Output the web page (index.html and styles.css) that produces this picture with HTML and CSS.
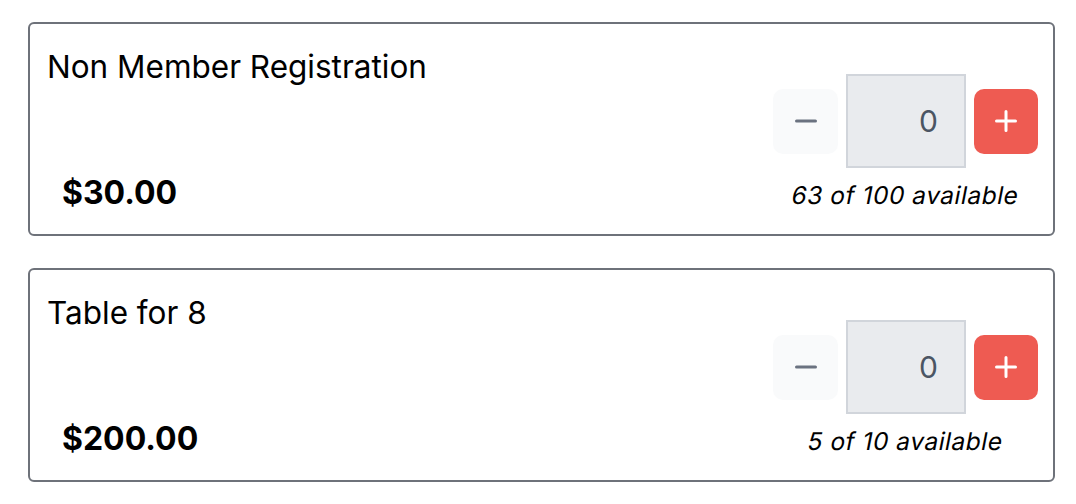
FILE: index.html
```html
<!DOCTYPE html>
<html lang="en">
<head>
<meta charset="utf-8">
<link rel="stylesheet" href="styles.css">
</head>
<body>
<div class="list">
  <div class="card">
    <div class="info">
      <div class="title">Non Member Registration</div>
      <div class="price">$30.00</div>
    </div>
    <div class="buy">
      <div class="stepper">
        <button class="btn minus" aria-label="decrease"><svg viewBox="0 0 22 22" width="22" height="22"><path d="M1.5 11h19" stroke="currentColor" stroke-width="3" stroke-linecap="round"/></svg></button>
        <div class="qty">0</div>
        <button class="btn plus" aria-label="increase"><svg viewBox="0 0 22 22" width="22" height="22"><path d="M1.5 11h19M11 1.5v19" stroke="currentColor" stroke-width="3" stroke-linecap="round"/></svg></button>
      </div>
      <div class="avail"><span class="slant">63 of 100 available</span></div>
    </div>
  </div>
  <div class="card">
    <div class="info">
      <div class="title">Table for 8</div>
      <div class="price">$200.00</div>
    </div>
    <div class="buy">
      <div class="stepper">
        <button class="btn minus" aria-label="decrease"><svg viewBox="0 0 22 22" width="22" height="22"><path d="M1.5 11h19" stroke="currentColor" stroke-width="3" stroke-linecap="round"/></svg></button>
        <div class="qty">0</div>
        <button class="btn plus" aria-label="increase"><svg viewBox="0 0 22 22" width="22" height="22"><path d="M1.5 11h19M11 1.5v19" stroke="currentColor" stroke-width="3" stroke-linecap="round"/></svg></button>
      </div>
      <div class="avail"><span class="slant">5 of 10 available</span></div>
    </div>
  </div>
</div>
</body>
</html>
```

FILE: styles.css
```css
* { box-sizing: border-box; }
html, body { margin: 0; padding: 0; background: #ffffff; }
body { font-family: Inter, "Noto Sans", sans-serif; color: #000; }

.list {
  display: flex;
  flex-direction: column;
  gap: 32px;
  padding: 22px 21px 0 28px;
}

.card {
  display: flex;
  justify-content: space-between;
  height: 214px;
  border: 2px solid #6e727a;
  border-radius: 6px;
  padding: 24px 15px 24px 17px;
}

.info {
  display: flex;
  flex-direction: column;
  justify-content: space-between;
}

.title {
  font-size: 31.5px;
  line-height: 38px;
  font-weight: 400;
}

.price {
  font-size: 32px;
  line-height: 36px;
  font-weight: 700;
  padding-left: 15px;
  margin-bottom: -1px;
}

.buy {
  align-self: flex-end;
  display: flex;
  flex-direction: column;
  align-items: center;
  gap: 13px;
}

.stepper {
  display: flex;
  align-items: center;
  gap: 8px;
}

.btn {
  width: 65px;
  height: 65px;
  border: none;
  border-radius: 10px;
  padding: 0;
  display: flex;
  align-items: center;
  justify-content: center;
}

.minus { background: #f9fafb; color: #6b7280; }
.plus { background: #ee5b52; color: #ffffff; width: 64px; }

.qty {
  width: 120px;
  height: 94px;
  background: #e9ebee;
  border: 2px solid #d1d5db;
  display: flex;
  align-items: center;
  justify-content: flex-end;
  padding-right: 26px;
  font-size: 30px;
  color: #4b5563;
}

.avail {
  font-size: 24.5px;
  line-height: 29px;
  letter-spacing: 0.5px;
}

.slant {
  display: inline-block;
  transform: skewX(-11deg);
}
```
